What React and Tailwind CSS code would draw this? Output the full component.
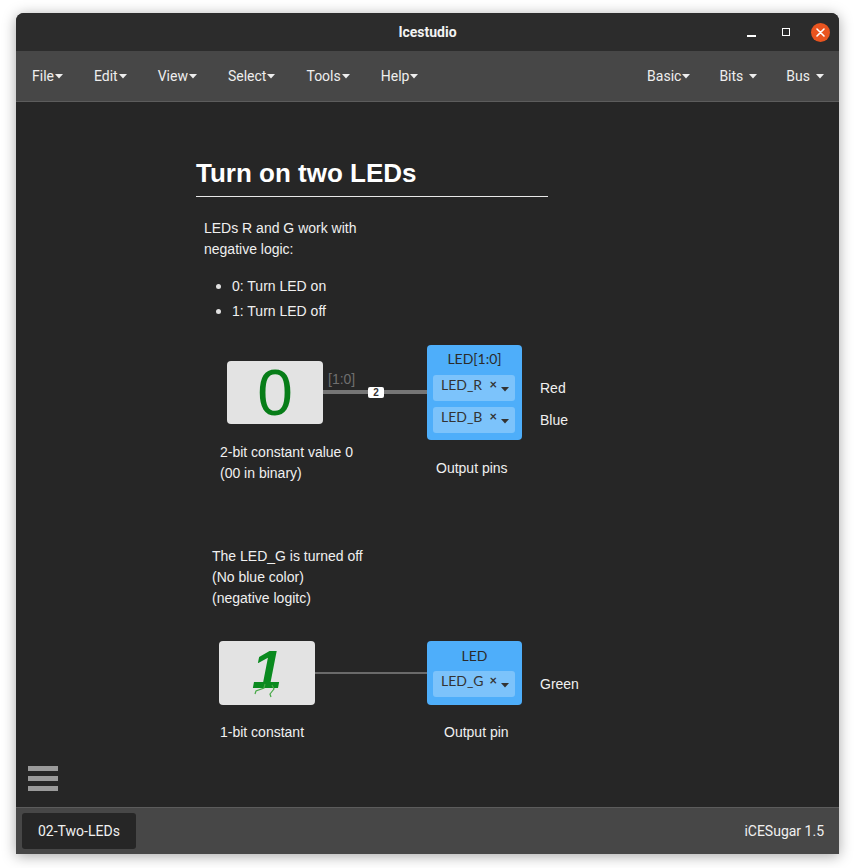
import React from "react";

function Caret({ className = "" }) {
  return (
    <svg width="8" height="5" viewBox="0 0 8 5" className={className}>
      <path d="M0 0 L8 0 L4 4.5 Z" fill="currentColor" />
    </svg>
  );
}

function MenuItem({ label, spaced }) {
  return (
    <div className="flex items-center text-[14px] text-[#eeeeee]">
      <span>{label}</span>
      <Caret className={spaced ? "ml-[6px]" : "ml-[1px]"} />
    </div>
  );
}

function PinSelect({ name, top }) {
  return (
    <div
      className="absolute left-[6px] right-[7px] h-[26px] rounded-[3px] bg-[#7cc3fb] flex items-start pl-[8px] text-[14px] leading-[20px] text-[#333]"
      style={{ top }}
    >
      <span>{name}</span>
      <span className="ml-auto mr-[4px] mt-[3px] text-[13px] font-bold leading-none">×</span>
      <Caret className="mr-[6px] mt-[12px] text-[#333]" />
    </div>
  );
}

function TextAt({ x, y, children, color = "text-[#f0f0f0]" }) {
  return (
    <div
      className={`absolute text-[14px] leading-[21px] whitespace-nowrap ${color}`}
      style={{ left: x, top: y + 1 }}
    >
      {children}
    </div>
  );
}

export default function App() {
  const sans = { fontFamily: '"Liberation Sans", Arial, sans-serif' };
  const lato = { fontFamily: 'Lato, "Liberation Sans", sans-serif' };

  return (
    <div className="w-[854px] h-[868px] bg-white pl-[16px] pt-[13px] overflow-hidden">
      <div
        className="w-[823px] h-[841px] flex flex-col rounded-t-[8px] overflow-hidden bg-[#262626] shadow-[0_2px_14px_rgba(0,0,0,0.35)]"
        style={{ fontFamily: 'Roboto, "Noto Sans", sans-serif' }}
      >
        {/* title bar */}
        <div className="h-[38px] shrink-0 bg-[#2c2c2c] relative flex items-center justify-center">
          <span className="text-[14px] font-bold text-[#f2f2f2]">Icestudio</span>
          <div className="absolute right-[9px] top-0 h-full flex items-center">
            <div className="w-[9px] h-[1.5px] bg-white mt-[8px] mr-[26px]" />
            <div className="w-[8px] h-[8px] border-[1.5px] border-white mr-[21px]" />
            <div className="w-[19px] h-[19px] rounded-full bg-[#e9541f] flex items-center justify-center">
              <svg width="9" height="9" viewBox="0 0 9 9">
                <path d="M1 1 L8 8 M8 1 L1 8" stroke="white" strokeWidth="1.6" strokeLinecap="round" />
              </svg>
            </div>
          </div>
        </div>

        {/* menu bar */}
        <div className="h-[51px] shrink-0 bg-[#474747] border-b border-[#5c5c5c] flex items-center pl-[16px] pr-[15px]">
          <div className="flex items-center gap-[31px]">
            <MenuItem label="File" />
            <MenuItem label="Edit" />
            <MenuItem label="View" />
            <MenuItem label="Select" />
            <MenuItem label="Tools" />
            <MenuItem label="Help" />
          </div>
          <div className="ml-auto flex items-center gap-[29px]">
            <MenuItem label="Basic" />
            <MenuItem label="Bits" spaced />
            <MenuItem label="Bus" spaced />
          </div>
        </div>

        {/* canvas */}
        <div className="relative flex-1 bg-[#262626]" style={sans}>
          <div className="absolute left-[180px] top-[55px] w-[352px] border-b border-[#e8e8e8] pb-[7px]">
            <h1 className="text-[26px] leading-[32px] font-bold text-white">Turn on two LEDs</h1>
          </div>

          <TextAt x={188} y={115}>
            LEDs R and G work with
            <br />
            negative logic:
          </TextAt>
          <div className="absolute left-[200px] top-[172px] text-[14px] text-[#f0f0f0]">
            <div className="flex items-center h-[25px]">
              <span className="w-[5px] h-[5px] rounded-full bg-[#e0e0e0] mr-[11px]" />
              0: Turn LED on
            </div>
            <div className="flex items-center h-[25px]">
              <span className="w-[5px] h-[5px] rounded-full bg-[#e0e0e0] mr-[11px]" />
              1: Turn LED off
            </div>
          </div>

          {/* constant 0 */}
          <div className="absolute left-[211px] top-[259px] w-[96px] h-[63px] rounded-[4px] bg-[#e3e3e3] flex items-center justify-center">
            <span className="text-[64px] leading-none text-[#077d18]">0</span>
          </div>
          <TextAt x={312} y={266} color="text-[#6f6f6f]">[1:0]</TextAt>
          <div className="absolute left-[307px] top-[288px] w-[104px] h-[4px] bg-[#767676]" />
          <div className="absolute left-[352px] top-[285px] w-[16px] h-[11px] rounded-[2px] bg-white flex items-center justify-center text-[10px] font-bold text-[#333] leading-none">
            2
          </div>

          {/* output LED[1:0] */}
          <div className="absolute left-[411px] top-[243px] w-[95px] h-[95px] rounded-[4px] bg-[#4eaefa]" style={lato}>
            <div className="text-center text-[14px] text-[#2b2b2b] mt-[3px]">LED[1:0]</div>
            <PinSelect name="LED_R" top={30} />
            <PinSelect name="LED_B" top={62} />
          </div>
          <TextAt x={524} y={275}>Red</TextAt>
          <TextAt x={524} y={307}>Blue</TextAt>

          <TextAt x={204} y={339}>
            2-bit constant value 0
            <br />
            (00 in binary)
          </TextAt>
          <TextAt x={420} y={355}>Output pins</TextAt>

          <TextAt x={196} y={443}>
            The LED_G is turned off
            <br />
            (No blue color)
            <br />
            (negative logitc)
          </TextAt>

          {/* constant 1 */}
          <div className="absolute left-[203px] top-[539px] w-[96px] h-[64px] rounded-[4px] bg-[#e3e3e3]">
            <span className="absolute left-[33px] top-[1px] text-[54px] font-bold italic leading-none text-[#0a8a1f]">1</span>
            <svg className="absolute left-0 top-0" width="96" height="64" viewBox="0 0 96 64">
              <path d="M46 43 L45 47 L37 50 L36 53" stroke="#45a845" strokeWidth="1.2" fill="none" />
              <path d="M53 44 L55 48 L51 53 L52 56" stroke="#45a845" strokeWidth="1.2" fill="none" />
            </svg>
          </div>
          <div className="absolute left-[299px] top-[570px] w-[112px] h-[2px] bg-[#6a6a6a]" />

          {/* output LED */}
          <div className="absolute left-[411px] top-[539px] w-[95px] h-[64px] rounded-[4px] bg-[#4eaefa]" style={lato}>
            <div className="text-center text-[14px] text-[#2b2b2b] mt-[4px]">LED</div>
            <PinSelect name="LED_G" top={30} />
          </div>
          <TextAt x={524} y={571}>Green</TextAt>

          <TextAt x={204} y={619}>1-bit constant</TextAt>
          <TextAt x={428} y={619}>Output pin</TextAt>

          {/* hamburger */}
          <div className="absolute left-[12px] top-[664px] w-[30px] flex flex-col gap-[5px]">
            <div className="h-[5px] bg-[#9a9a9a]" />
            <div className="h-[5px] bg-[#9a9a9a]" />
            <div className="h-[5px] bg-[#9a9a9a]" />
          </div>
        </div>

        {/* footer */}
        <div className="h-[47px] shrink-0 bg-[#474747] border-t border-[#5c5c5c] flex items-center pl-[6px] pr-[15px]">
          <div className="h-[36px] px-[16px] rounded-[3px] bg-[#262626] flex items-center text-[14px] text-[#f0f0f0]">
            02-Two-LEDs
          </div>
          <span className="ml-auto text-[14px] text-[#f0f0f0]">iCESugar 1.5</span>
        </div>
      </div>
    </div>
  );
}
